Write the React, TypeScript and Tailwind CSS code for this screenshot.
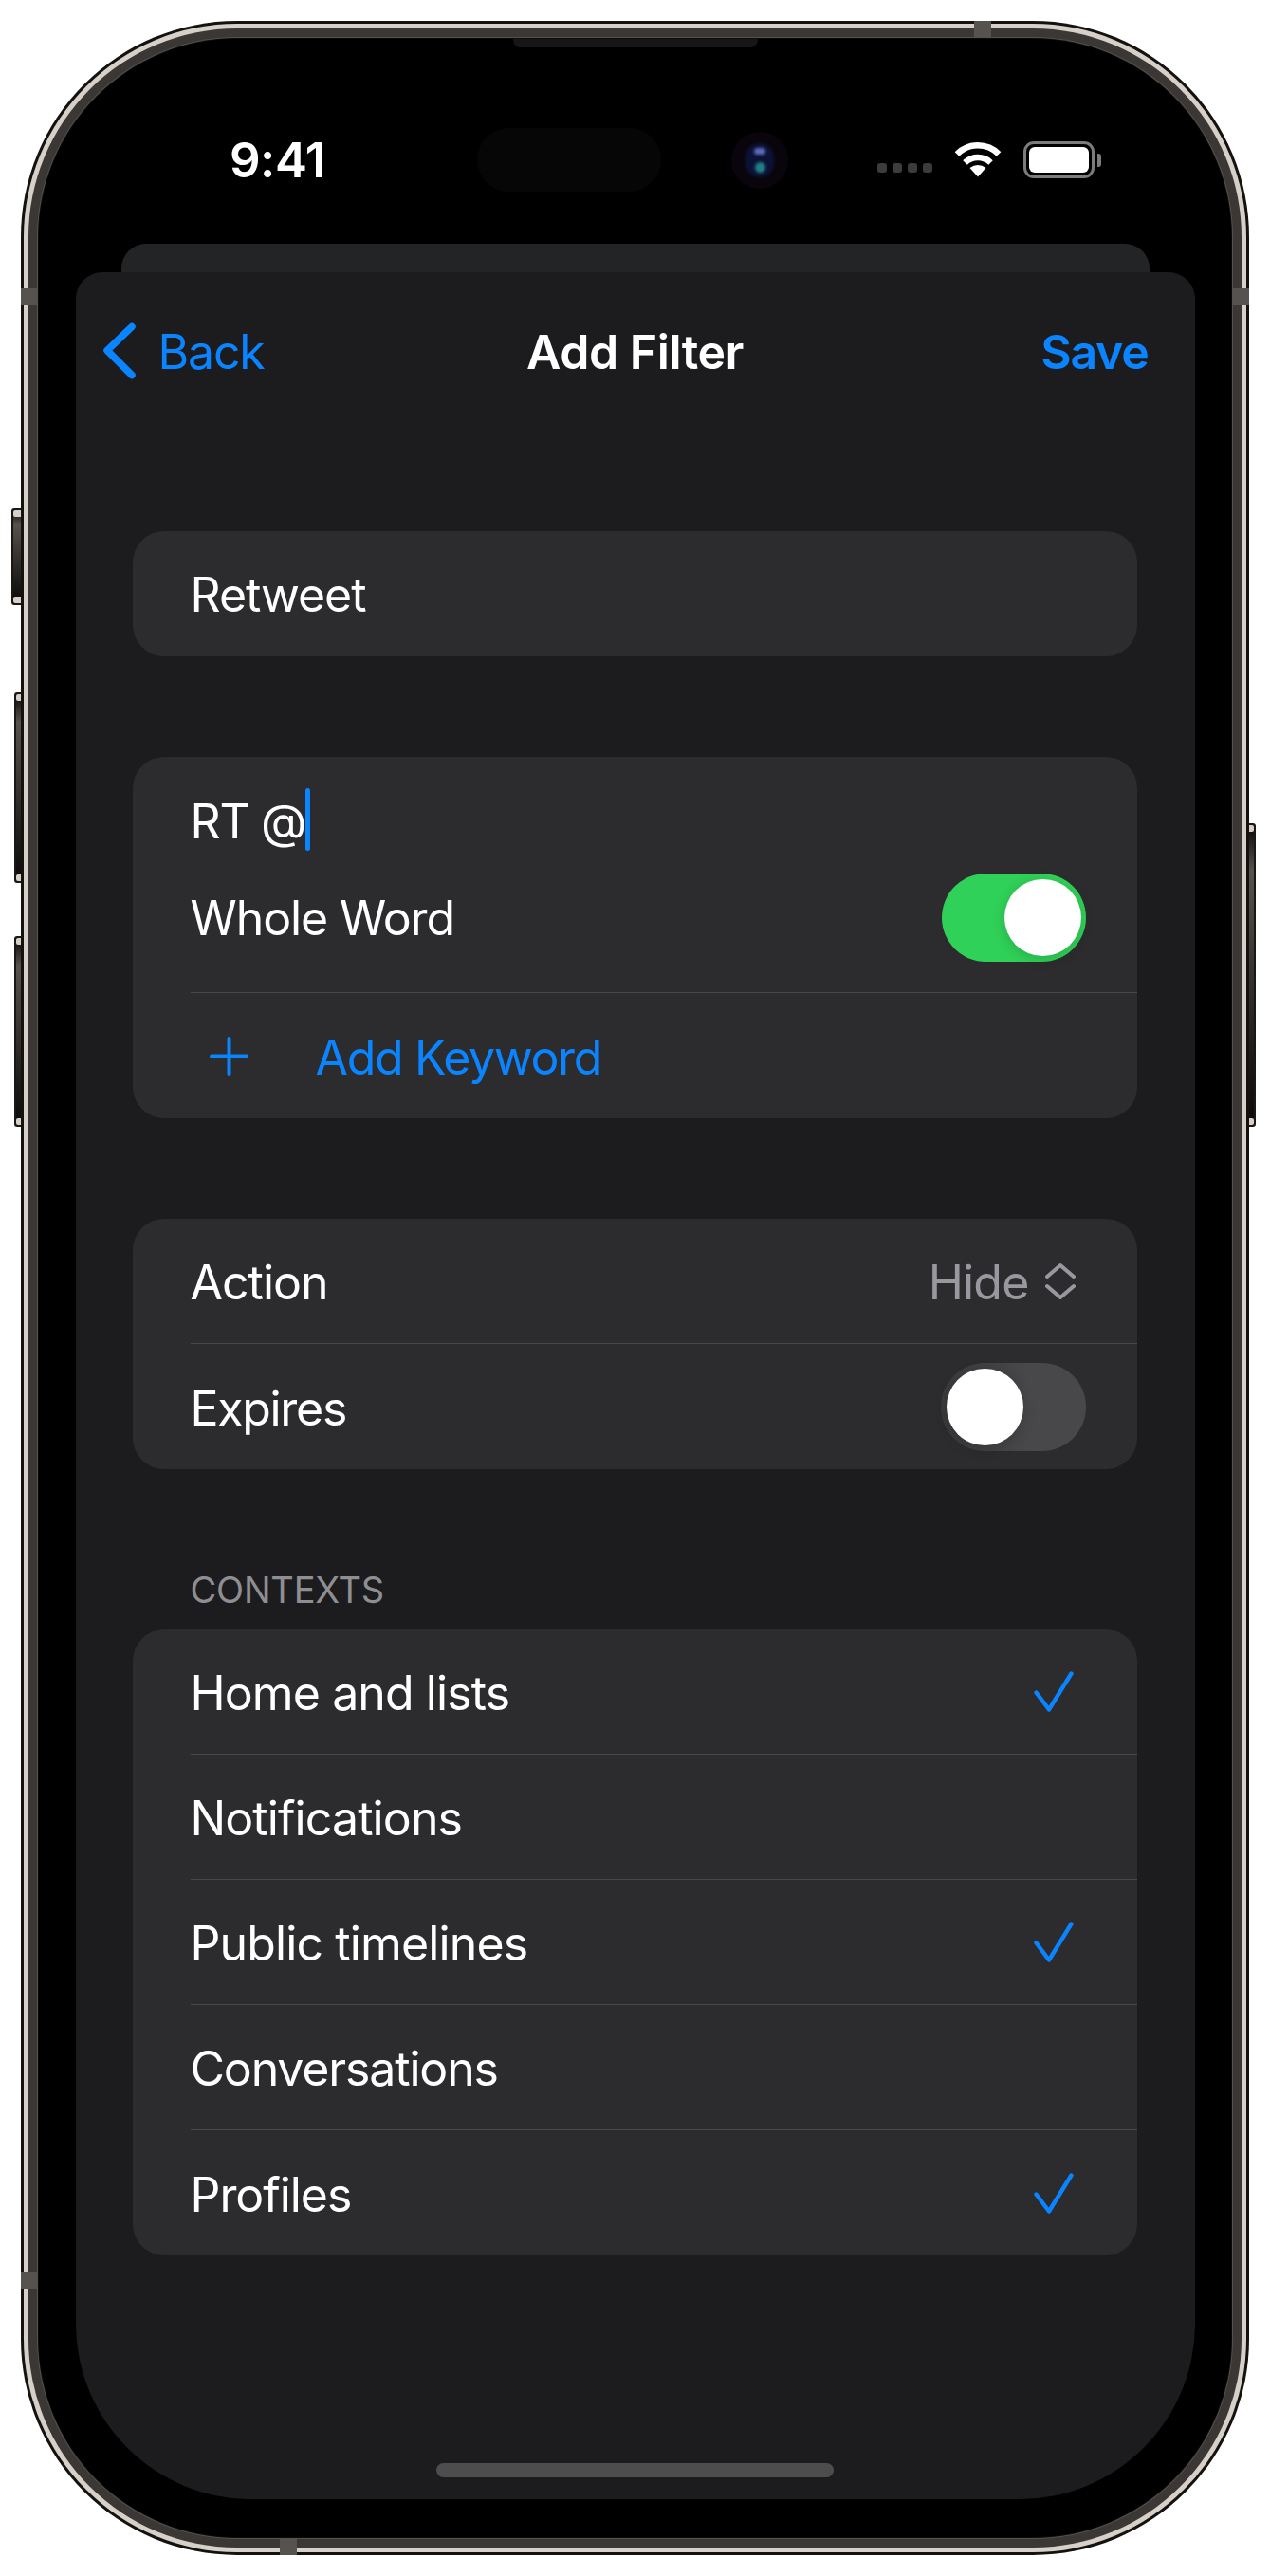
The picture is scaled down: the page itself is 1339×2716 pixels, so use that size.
import React from "react";

const font = { fontFamily: "Inter, 'Liberation Sans', sans-serif" };

function Toggle({ on }: { on: boolean }) {
  return (
    <div
      className={
        on
          ? "flex h-[93px] w-[152px] items-center justify-end rounded-full bg-[#30d158] pr-[5px]"
          : "flex h-[93px] w-[153px] items-center justify-start rounded-full bg-gradient-to-r from-[#3a3a3d] to-[#48484b] to-60% pl-[6px]"
      }
    >
      <div className="h-[81px] w-[81px] rounded-full bg-white shadow-[0_3px_14px_rgba(0,0,0,0.18)]" />
    </div>
  );
}

function Check() {
  return (
    <svg width="42" height="43" viewBox="0 0 42 43" fill="none" stroke="#0a84ff" strokeWidth="4.4" strokeLinecap="round" strokeLinejoin="round">
      <path d="M2.5 22.5 L16 40.5 L39.5 2.5" />
    </svg>
  );
}

function Row({ label, last, right, pr, track }: { label: string; last?: boolean; right?: React.ReactNode; pr?: string; track: string }) {
  return (
    <div className="pl-[61px]">
      <div className={`flex h-[132px] items-center justify-between ${last ? "" : "border-b border-[#48484a]"} ${pr ?? "pr-[67px]"}`}>
        <span className={`mt-[3px] text-[50px] leading-none text-white ${track}`}>{label}</span>
        {right}
      </div>
    </div>
  );
}

function SideButton({ className }: { className: string }) {
  return (
    <div className={`absolute flex flex-col justify-between rounded-[3px] border-[2px] border-[#1a1714] bg-gradient-to-b from-[#0b0a09] via-[#57524d] via-15% to-[#0b0a09] ${className}`}>
      <div className="h-[7px] rounded-[2px] bg-[#d6d0c9]" />
      <div className="h-[7px] rounded-[2px] bg-[#d6d0c9]" />
    </div>
  );
}

export default function App() {
  return (
    <div className="relative h-[2716px] w-[1339px] overflow-hidden bg-white pl-[22px] pt-[22px]" style={font}>
      {/* side buttons */}
      <SideButton className="left-[12px] top-[536px] h-[102px] w-[20px]" />
      <SideButton className="left-[15px] top-[730px] h-[201px] w-[17px]" />
      <SideButton className="left-[15px] top-[987px] h-[201px] w-[17px]" />
      <SideButton className="left-[1307px] top-[868px] h-[320px] w-[17px]" />

      {/* frame */}
      <div className="relative h-[2672px] w-[1295px] rounded-[228px] bg-[#14120f] p-[3px]">
        <div className="h-full w-full rounded-[225px] bg-[#d6d0c9] p-[5px]">
          <div className="h-full w-full rounded-[220px] bg-[#3b3734] p-[9px]">
            <div className="h-full w-full rounded-[211px] bg-[#55514d] p-[1px]">
              <div className="h-full w-full rounded-[210px] bg-[#0c0b0a] p-[1px]">
                <div className="flex h-full w-full flex-col items-center overflow-hidden rounded-[209px] bg-black">
                  {/* speaker */}
                  <div className="h-[9px] w-[258px] rounded-b-[8px] bg-[#161616]" />
                  {/* status bar */}
                  <div className="mt-[85px] flex h-[67px] w-full items-center pl-[201px]">
                    <span className="w-[261px] text-[51px] font-semibold leading-none tracking-[-0.5px] text-white">9:41</span>
                    <div className="h-[67px] w-[194px] rounded-full bg-[#060606]" />
                    <div className="ml-[74px] flex h-[60px] w-[60px] items-center justify-center rounded-full bg-[#0a050c]">
                      <div className="flex h-[36px] w-[30px] flex-col items-center justify-between rounded-full bg-[#0c1236] py-[5px] blur-[1.5px]">
                        <div className="h-[7px] w-[12px] rounded-full bg-[#5a68b8]" />
                        <div className="h-[11px] w-[11px] rounded-full bg-[#1f7f86]" />
                      </div>
                    </div>
                    <div className="ml-[94px] mt-[17px] flex gap-[6px]">
                      <div className="h-[10px] w-[10px] rounded-[3px] bg-[#3c3c3c]" />
                      <div className="h-[10px] w-[10px] rounded-[3px] bg-[#3c3c3c]" />
                      <div className="h-[10px] w-[10px] rounded-[3px] bg-[#3c3c3c]" />
                      <div className="h-[10px] w-[10px] rounded-[3px] bg-[#3c3c3c]" />
                    </div>
                    <svg className="ml-[23px] mb-[1px]" width="50" height="38" viewBox="0 0 50 38" fill="none">
                      <path d="M3 13.5 A31 31 0 0 1 47 13.5" stroke="#fff" strokeWidth="6.5" />
                      <path d="M11.5 22.5 A19.5 19.5 0 0 1 38.5 22.5" stroke="#fff" strokeWidth="6.5" />
                      <path d="M25 37.5 L16.5 28 Q25 22 33.5 28 Z" fill="#fff" />
                    </svg>
                    <div className="ml-[23px] flex items-center">
                      <div className="h-[39px] w-[75px] rounded-[11px] border-[3px] border-[#7c7c7c] p-[3px]">
                        <div className="h-full w-full rounded-[6px] bg-white" />
                      </div>
                      <div className="ml-[3px] h-[14px] w-[4px] rounded-r-[3px] bg-[#7c7c7c]" />
                    </div>
                  </div>

                  {/* back sheet */}
                  <div className="mt-[55px] h-[30px] w-[1084px] shrink-0 rounded-t-[26px] bg-[#232426]" />

                  {/* sheet */}
                  <div className="flex h-[2348px] w-[1180px] shrink-0 flex-col rounded-t-[28px] rounded-b-[185px] bg-[#1c1c1e]">
                    {/* nav */}
                    <div className="flex h-[166px] items-center pl-[28px] pr-[49px]">
                      <div className="flex flex-1 items-center">
                        <svg width="36" height="60" viewBox="0 0 36 60" fill="none" stroke="#0a84ff" strokeWidth="7.5" strokeLinecap="round" strokeLinejoin="round">
                          <path d="M31 4.5 L5 29.5 L31 55.5" />
                        </svg>
                        <span className="ml-[23px] mt-[1px] text-[50px] leading-none tracking-[-1.2px] text-[#0a84ff]">Back</span>
                      </div>
                      <span className="ml-[21px] mt-[1px] text-[50px] font-semibold leading-none tracking-[-0.45px] text-white">Add Filter</span>
                      <div className="mt-[2px] flex-1 text-right">
                        <span className="text-[50px] font-semibold leading-none tracking-[-1.3px] text-[#0a84ff]">Save</span>
                      </div>
                    </div>

                    <div className="ml-[60px] mr-[61px] mt-[107px] flex flex-col">
                      {/* name */}
                      <div className="h-[132px] rounded-[33px] bg-[#2c2c2e]">
                        <div className="flex h-[132px] items-center pl-[61px]">
                          <span className="mt-[2px] text-[50px] leading-none tracking-[-1.05px] text-white">Retweet</span>
                        </div>
                      </div>

                      {/* keywords */}
                      <div className="mt-[106px] h-[381px] rounded-[33px] bg-[#2c2c2e]">
                        <div className="ml-[61px] flex h-[66px] translate-y-[33px] items-center">
                          <span className="mt-[3px] text-[50px] leading-none tracking-[-1.3px] text-white">RT @</span>
                          <div className="h-[66px] w-[5px] rounded-full bg-[#0a84ff]" />
                        </div>
                        <div className="ml-[61px] mt-[57px] flex h-[126px] items-start justify-between border-b border-[#48484a] pr-[54px]">
                          <span className="mt-[22px] text-[50px] leading-none tracking-[-1.1px] text-white">Whole Word</span>
                          <Toggle on />
                        </div>
                        <div className="flex h-[132px] items-center pl-[81px]">
                          <svg width="41" height="41" viewBox="0 0 41 41" fill="none" stroke="#0a84ff" strokeWidth="4" strokeLinecap="round">
                            <path d="M20.5 2 V39 M2 20.5 H39" />
                          </svg>
                          <span className="ml-[71px] mt-[3px] text-[50px] leading-none tracking-[-1.35px] text-[#0a84ff]">Add Keyword</span>
                        </div>
                      </div>

                      {/* action */}
                      <div className="mt-[106px] h-[264px] rounded-[33px] bg-[#2c2c2e]">
                        <Row
                          label="Action"
                          track="tracking-[-1px]"
                          pr="pr-[65px]"
                          right={
                            <div className="flex items-center">
                              <span className="mt-[3px] text-[50px] leading-none tracking-[-0.8px] text-[#98989e]">Hide</span>
                              <svg className="ml-[17px]" width="32" height="40" viewBox="0 0 32 40" fill="none" stroke="#98989e" strokeWidth="4" strokeLinecap="round" strokeLinejoin="round">
                                <path d="M2 15 L16 3 L30 15 M2 25 L16 37 L30 25" />
                              </svg>
                            </div>
                          }
                        />
                        <Row label="Expires" last pr="pr-[54px]" track="tracking-[-1.3px]" right={<Toggle on={false} />} />
                      </div>

                      <div className="mb-[23px] ml-[61px] mt-[109px] text-[38px] leading-[37px] tracking-[-0.2px] text-[#8e8e93]">CONTEXTS</div>

                      {/* contexts */}
                      <div className="h-[660px] rounded-[33px] bg-[#2c2c2e]">
                        <Row label="Home and lists" track="tracking-[-0.9px]" right={<Check />} />
                        <Row label="Notifications" track="tracking-[-0.9px]" />
                        <Row label="Public timelines" track="tracking-[-0.87px]" right={<Check />} />
                        <Row label="Conversations" track="tracking-[-1.15px]" />
                        <Row label="Profiles" last track="tracking-[-1.05px]" right={<Check />} />
                      </div>
                    </div>

                    <div className="mb-[23px] mt-auto h-[15px] w-[419px] self-center rounded-full bg-[#4d4d4d]" />
                  </div>
                </div>
              </div>
            </div>
          </div>
        </div>

        {/* antenna bands */}
        <div className="absolute left-[1005px] top-0 h-[18px] w-[18px] bg-[#55524f]" />
        <div className="absolute left-0 top-[282px] h-[18px] w-[18px] bg-[#55524f]" />
        <div className="absolute right-0 top-[282px] h-[18px] w-[18px] bg-[#55524f]" />
        <div className="absolute bottom-[281px] left-0 h-[18px] w-[18px] bg-[#55524f]" />
        <div className="absolute bottom-0 left-[273px] h-[18px] w-[18px] bg-[#55524f]" />
      </div>
    </div>
  );
}
